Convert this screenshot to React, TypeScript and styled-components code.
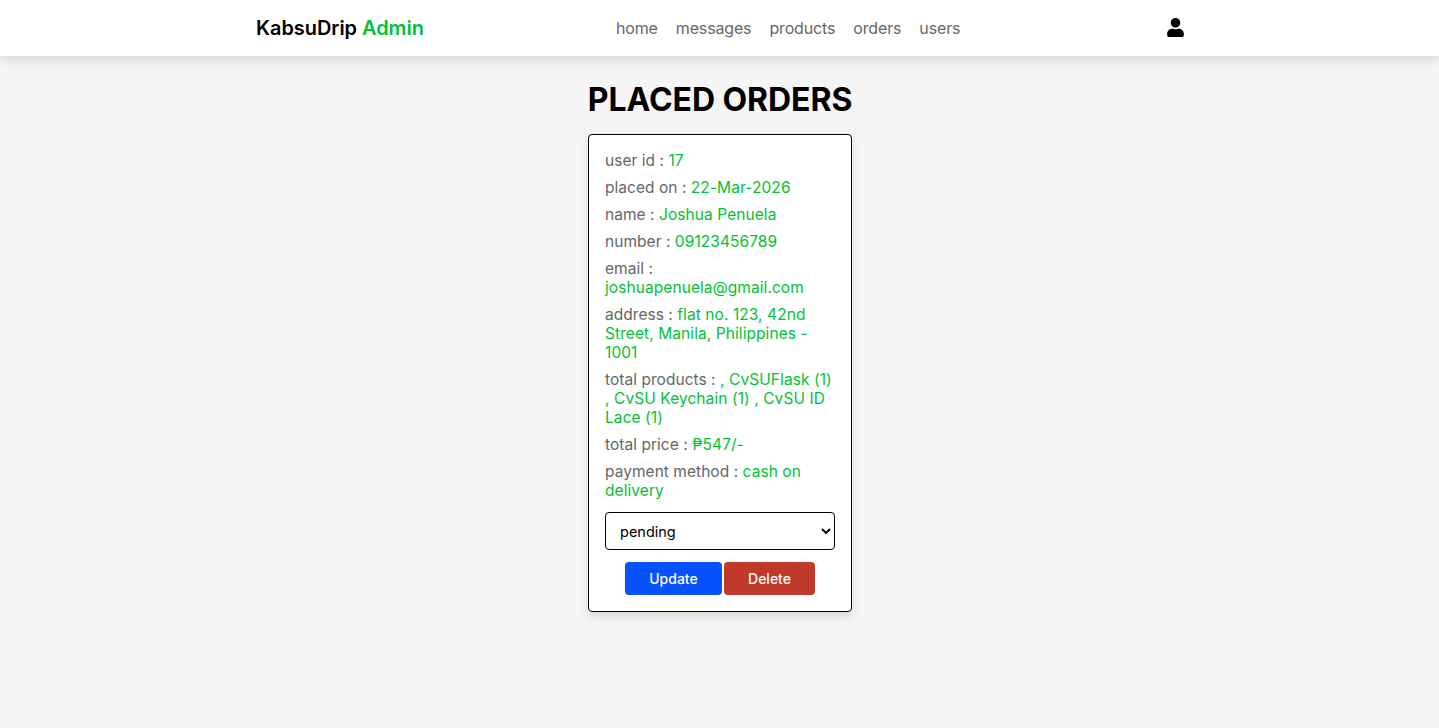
import React from "react";
import styled, { createGlobalStyle } from "styled-components";
import { FaUser } from "react-icons/fa";

const Global = createGlobalStyle`
  * { box-sizing: border-box; }
  html, body { margin: 0; padding: 0; }
  body { background: #f5f5f5; font-family: Inter, "Noto Sans", sans-serif; min-height: 728px; }
`;

const Header = styled.header`
  height: 56px;
  background: #fff;
  box-shadow: 0 5px 10px rgba(0, 0, 0, 0.1);
`;

const HeaderInner = styled.div`
  width: 929px;
  height: 100%;
  margin-left: 256px;
  display: flex;
  align-items: center;
  justify-content: space-between;
`;

const Logo = styled.div`
  width: 168px;
  font-size: 19.9px;
  font-weight: 600;
  color: #000;
  white-space: nowrap;
`;

const Accent = styled.span`
  color: #00c234;
`;

const Nav = styled.nav`
  width: 344px;
  display: flex;
  gap: 18px;
`;

const NavLink = styled.a`
  font-size: 16px;
  letter-spacing: -0.15px;
  color: #666;
`;

const IconBox = styled.div`
  width: 33px;
  display: flex;
  justify-content: flex-end;
  color: #000;
  font-size: 19px;
  margin-top: -2px;
`;

const Section = styled.section`
  padding: 24px 0 0 1px;
  display: flex;
  flex-direction: column;
  align-items: center;
`;

const Title = styled.h1`
  margin: 0 0 14px;
  font-size: 32px;
  line-height: 40px;
  letter-spacing: -0.06px;
  font-weight: 700;
  color: #000;
  text-transform: uppercase;
`;

const Card = styled.div`
  width: 264px;
  height: 478px;
  background: #fff;
  border: 1px solid #000;
  border-radius: 4px;
  padding: 16px;
  box-shadow: 0 5px 10px rgba(0, 0, 0, 0.1);
`;

const Row = styled.p`
  margin: 0 0 8px;
  font-size: 15.5px;
  line-height: 19px;
  letter-spacing: 0.04px;
  color: #666;
`;

const Value = styled.span`
  color: #00c234;
  letter-spacing: 0.08px;
`;

const StatusSelect = styled.select`
  display: block;
  width: 100%;
  height: 38px;
  margin-top: 12px;
  padding: 0 10px;
  border: 1px solid #000;
  border-radius: 4px;
  background: #fff;
  font-family: inherit;
  font-size: 14.5px;
  color: #000;
`;

const Actions = styled.div`
  display: flex;
  justify-content: center;
  gap: 2px;
  margin-top: 12px;
`;

const ActionButton = styled.button<{ $bg: string; $w: number }>`
  width: ${(p) => p.$w}px;
  height: 33px;
  border: 0;
  border-radius: 4px;
  background: ${(p) => p.$bg};
  color: #fff;
  font-family: inherit;
  font-size: 14px;
  font-weight: 500;
`;

const rows: [string, string][] = [
  ["user id", "17"],
  ["placed on", "22-Mar-2026"],
  ["name", "Joshua Penuela"],
  ["number", "09123456789"],
  ["email", "joshuapenuela@gmail.com"],
  ["address", "flat no. 123, 42nd Street, Manila, Philippines - 1001"],
  ["total products", ", CvSUFlask (1) , CvSU Keychain (1) , CvSU ID Lace (1)"],
  ["total price", "₱547/-"],
  ["payment method", "cash on delivery"],
];

export default function App() {
  return (
    <>
      <Global />
      <Header>
        <HeaderInner>
          <Logo>
            KabsuDrip <Accent>Admin</Accent>
          </Logo>
          <Nav>
            {["home", "messages", "products", "orders", "users"].map((n) => (
              <NavLink key={n}>{n}</NavLink>
            ))}
          </Nav>
          <IconBox>
            <FaUser />
          </IconBox>
        </HeaderInner>
      </Header>
      <Section>
        <Title>Placed Orders</Title>
        <Card>
          {rows.map(([k, v]) => (
            <Row key={k}>
              {k} : <Value>{v}</Value>
            </Row>
          ))}
          <StatusSelect defaultValue="pending">
            <option value="pending">pending</option>
            <option value="completed">completed</option>
          </StatusSelect>
          <Actions>
            <ActionButton $bg="#0652ff" $w={97}>Update</ActionButton>
            <ActionButton $bg="#c0392b" $w={91}>Delete</ActionButton>
          </Actions>
        </Card>
      </Section>
    </>
  );
}
